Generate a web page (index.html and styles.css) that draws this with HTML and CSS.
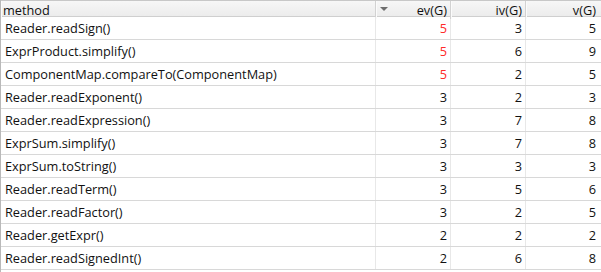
FILE: index.html
```html
<!DOCTYPE html>
<html>
<head>
<meta charset="utf-8">
<link rel="stylesheet" href="styles.css">
</head>
<body>
<div class="table">
  <div class="row head">
    <div class="cell name">method</div>
    <div class="cell num sorted"><span class="arrow"></span>ev(G)</div>
    <div class="cell num">iv(G)</div>
    <div class="cell num last">v(G)</div>
  </div>
  <div class="row"><div class="cell name">Reader.readSign()</div><div class="cell num red">5</div><div class="cell num">3</div><div class="cell num last">5</div></div>
  <div class="row"><div class="cell name">ExprProduct.simplify()</div><div class="cell num red">5</div><div class="cell num">6</div><div class="cell num last">9</div></div>
  <div class="row"><div class="cell name">ComponentMap.compareTo(ComponentMap)</div><div class="cell num red">5</div><div class="cell num">2</div><div class="cell num last">5</div></div>
  <div class="row"><div class="cell name">Reader.readExponent()</div><div class="cell num">3</div><div class="cell num">2</div><div class="cell num last">3</div></div>
  <div class="row"><div class="cell name">Reader.readExpression()</div><div class="cell num">3</div><div class="cell num">7</div><div class="cell num last">8</div></div>
  <div class="row"><div class="cell name">ExprSum.simplify()</div><div class="cell num">3</div><div class="cell num">7</div><div class="cell num last">8</div></div>
  <div class="row"><div class="cell name">ExprSum.toString()</div><div class="cell num">3</div><div class="cell num">3</div><div class="cell num last">3</div></div>
  <div class="row"><div class="cell name">Reader.readTerm()</div><div class="cell num">3</div><div class="cell num">5</div><div class="cell num last">6</div></div>
  <div class="row"><div class="cell name">Reader.readFactor()</div><div class="cell num">3</div><div class="cell num">2</div><div class="cell num last">5</div></div>
  <div class="row"><div class="cell name">Reader.getExpr()</div><div class="cell num">2</div><div class="cell num">2</div><div class="cell num last">2</div></div>
  <div class="row"><div class="cell name">Reader.readSignedInt()</div><div class="cell num">2</div><div class="cell num">6</div><div class="cell num last">8</div></div>
</div>
</body>
</html>
```
FILE: styles.css
```css
html, body {
  margin: 0;
  padding: 0;
  background: #fff;
}
body {
  font-family: "Open Sans", "Noto Sans", sans-serif;
  font-size: 12.75px;
  color: #111;
}
.table {
  width: 601px;
  height: 272px;
  overflow: hidden;
  border-left: 1px solid #b9b9b9;
  box-sizing: border-box;
}
.row {
  display: grid;
  grid-template-columns: 375px 75px 75px 73px;
  height: 23px;
  border-bottom: 1px solid #d8d8d8;
  box-sizing: border-box;
}
.cell {
  display: flex;
  align-items: center;
  padding: 0 3px 0 4px;
  white-space: nowrap;
  border-right: 1px solid #e8e8e8;
  box-sizing: border-box;
}
.cell.last { border-right: none; }
.num { justify-content: flex-end; }
.red { color: #ff2a2a; }
.row.head {
  height: 17px;
  border-top: 1px solid #c8c8c8;
  border-bottom: 1px solid #cfcfcf;
  background: linear-gradient(#f7f7f7, #ececec);
  color: #111;
}
.row.head .cell {
  padding-left: 2px;
  border-right: 1px solid #d2d2d2;
  box-shadow: inset 1px 0 0 #fbfbfb;
}
.row.head .cell.last { border-right: none; }
.sorted { position: relative; }
.arrow {
  position: absolute;
  left: 4px;
  top: 6px;
  width: 0;
  height: 0;
  border-left: 4px solid transparent;
  border-right: 4px solid transparent;
  border-top: 4px solid #6e6e6e;
}
```
